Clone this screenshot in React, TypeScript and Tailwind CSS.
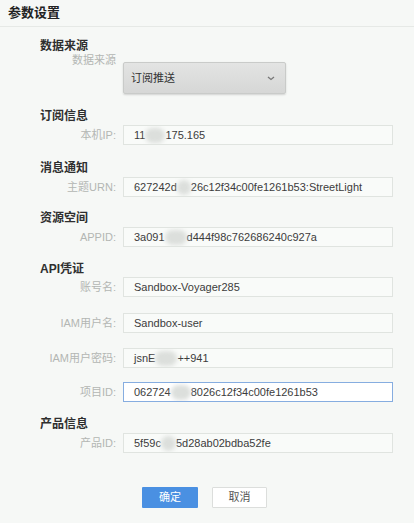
import type { ReactNode } from 'react';

const font = { fontFamily: '"Liberation Sans", "Noto Sans CJK SC", sans-serif' };

function Blur({ w }: { w: number }) {
  return (
    <span
      className="inline-block h-[15px] align-middle rounded-full bg-[#dcdfdc] blur-[2px]"
      style={{ width: w }}
    />
  );
}

function SectionTitle({ children, className = '' }: { children: ReactNode; className?: string }) {
  return (
    <div className={`text-[12px] leading-[14px] font-bold text-[#2f2f2f] ${className}`}>
      {children}
    </div>
  );
}

function Field({
  label,
  children,
  focused = false,
  className = '',
}: {
  label: string;
  children: ReactNode;
  focused?: boolean;
  className?: string;
}) {
  return (
    <div className={`flex items-center gap-[7px] ${className}`}>
      <div className="w-[76px] text-right text-[11px] text-[#b3b6b3] whitespace-nowrap">{label}</div>
      <div
        className={`flex-1 h-[20px] flex items-center pl-[10px] text-[11px] text-[#3c3c3c] whitespace-nowrap overflow-hidden border ${
          focused ? 'border-[#86ade0] bg-white' : 'border-[#e0e4e0] bg-[#f9fbf9]'
        }`}
      >
        {children}
      </div>
    </div>
  );
}

export default function App() {
  return (
    <div className="w-[414px] h-[523px] bg-[#f6f8f6] overflow-hidden" style={font}>
      <div className="h-[27px] flex items-center px-[8px] border-b border-[#e6e9e6]">
        <span className="text-[13px] font-bold text-[#222]">参数设置</span>
      </div>

      <div className="pl-[40px] pr-[21px]">
        <SectionTitle className="mt-[12px]">数据来源</SectionTitle>
        <div className="flex items-start gap-[7px] mt-[9px]">
          <div className="w-[76px] -mt-[9px] text-right text-[11px] leading-[14px] text-[#b3b6b3]">数据来源</div>
          <div className="w-[163px] h-[32px] flex items-center justify-between pl-[7px] pr-[10px] rounded-[2px] border border-[#c9cbc9] bg-gradient-to-b from-[#e3e4e3] to-[#d6d7d6] shadow-[0_1px_2px_rgba(0,0,0,0.15)]">
            <span className="text-[11px] text-[#333]">订阅推送</span>
            <svg width="8" height="5" viewBox="0 0 8 5" fill="none">
              <path d="M1 1l3 2.5L7 1" stroke="#777" strokeWidth="1.3" />
            </svg>
          </div>
        </div>

        <SectionTitle className="mt-[15px]">订阅信息</SectionTitle>
        <Field label="本机IP:" className="mt-[2px]">
          11<Blur w={20} />175.165
        </Field>

        <SectionTitle className="mt-[16px]">消息通知</SectionTitle>
        <Field label="主题URN:" className="mt-[2px]">
          627242d<Blur w={14} />26c12f34c00fe1261b53:StreetLight
        </Field>

        <SectionTitle className="mt-[14px]">资源空间</SectionTitle>
        <Field label="APPID:" className="mt-[2px]">
          3a091<Blur w={22} />d444f98c762686240c927a
        </Field>

        <SectionTitle className="mt-[15px]">API凭证</SectionTitle>
        <Field label="账号名:" className="mt-[1px]">
          Sandbox-Voyager285
        </Field>
        <Field label="IAM用户名:" className="mt-[16px]">
          Sandbox-user
        </Field>
        <Field label="IAM用户密码:" className="mt-[15px]">
          jsnE<Blur w={22} />++941
        </Field>
        <Field label="项目ID:" className="mt-[14px]" focused>
          062724<Blur w={20} />8026c12f34c00fe1261b53
        </Field>

        <SectionTitle className="mt-[15px]">产品信息</SectionTitle>
        <Field label="产品ID:" className="mt-[2px]">
          5f59c<Blur w={15} />5d28ab02bdba52fe
        </Field>
      </div>

      <div className="flex justify-center gap-[14px] mt-[34px] pr-[5px]">
        <button className="w-[56px] h-[21px] bg-[#4a90e2] text-white text-[11px] rounded-[1px]">确定</button>
        <button className="w-[55px] h-[21px] bg-white border border-[#dcdedc] text-[#555] text-[11px] rounded-[1px]">
          取消
        </button>
      </div>
    </div>
  );
}
